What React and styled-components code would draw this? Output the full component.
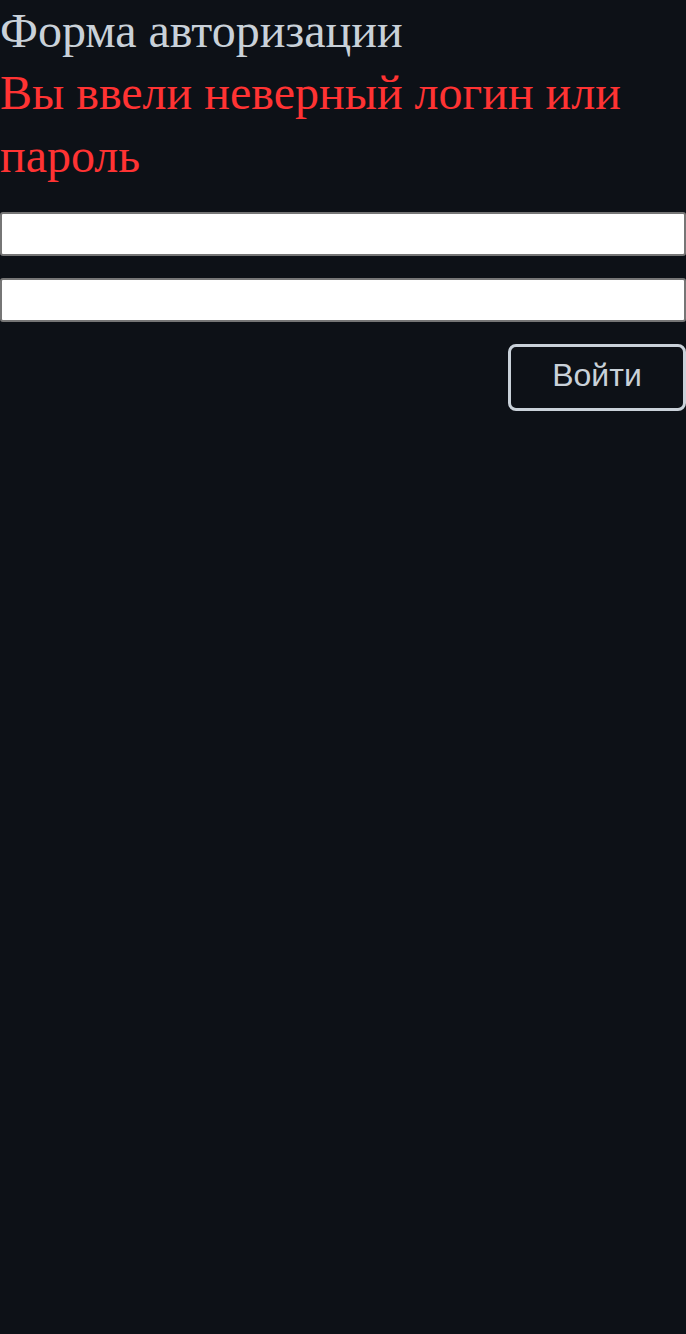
import React from 'react';
import styled, { createGlobalStyle } from 'styled-components';

const GlobalStyle = createGlobalStyle`
  html, body {
    margin: 0;
    padding: 0;
    background: #0d1117;
  }
  body {
    font-family: "Liberation Serif", "Times New Roman", serif;
    color: #c9d1d9;
  }
`;

export default function App() {
  return (
    <>
      <GlobalStyle />
      <Page>
        <Title>Форма авторизации</Title>
        <ErrorText>Вы ввели неверный логин или пароль</ErrorText>
        <Form onSubmit={(e) => e.preventDefault()}>
          <Field type="text" />
          <Field type="password" />
          <Actions>
            <SubmitButton type="submit">Войти</SubmitButton>
          </Actions>
        </Form>
      </Page>
    </>
  );
}

const Page = styled.div`
  display: flex;
  flex-direction: column;
  width: 100%;
  min-height: 100vh;
`;

const Title = styled.h1`
  margin: 0;
  font-size: 48px;
  font-weight: 400;
  line-height: 1.3;
`;

const ErrorText = styled.p`
  margin: 0;
  font-size: 48px;
  line-height: 1.3;
  color: #ff3333;
`;

const Form = styled.form`
  display: flex;
  flex-direction: column;
  gap: 22px;
  margin-top: 25px;
`;

const Field = styled.input`
  box-sizing: border-box;
  width: 100%;
  height: 44px;
  margin: 0;
  border: 2px solid #767676;
  border-radius: 3px;
  background: #fff;
  font-size: 20px;
`;

const Actions = styled.div`
  display: flex;
  justify-content: flex-end;
`;

const SubmitButton = styled.button`
  box-sizing: border-box;
  width: 178px;
  height: 67px;
  padding: 0 0 4px;
  border: 3px solid #c9d1d9;
  border-radius: 8px;
  background: transparent;
  color: #c9d1d9;
  font-family: "Liberation Sans", Arial, sans-serif;
  font-size: 32px;
  cursor: pointer;
`;
